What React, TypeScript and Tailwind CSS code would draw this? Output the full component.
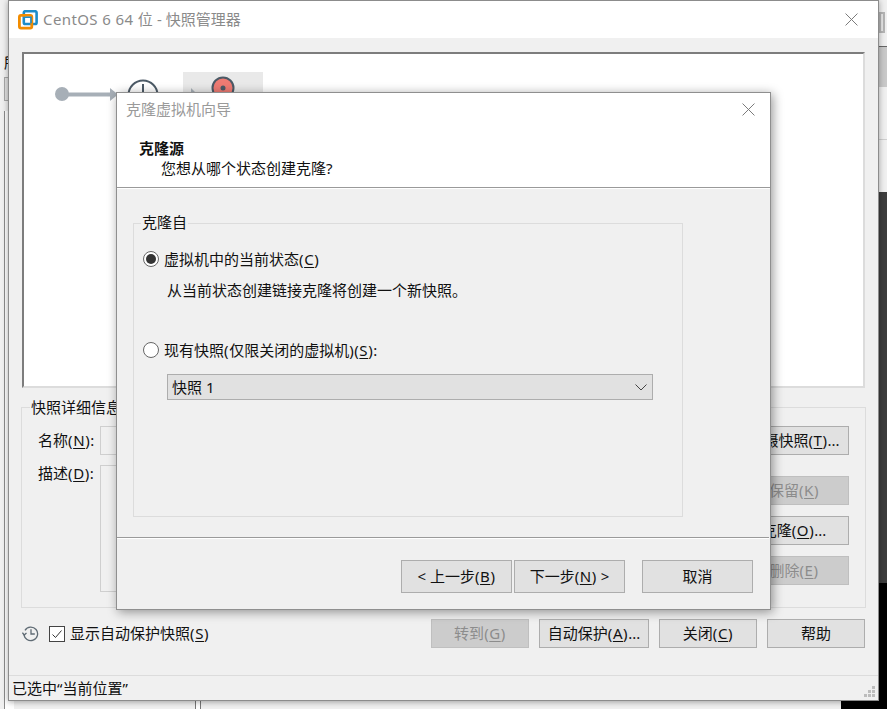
const font = { fontFamily: '"Noto Sans", "Noto Sans CJK SC", sans-serif' };

function Key({ k }: { k: string }) {
    return (
        <span className="tracking-[0.6px]">
            (<span className="underline underline-offset-2">{k}</span>)
        </span>
    );
}

function Btn({
    children,
    disabled,
    className = "",
}: {
    children: React.ReactNode;
    disabled?: boolean;
    className?: string;
}) {
    return (
        <div
            className={
                "flex items-center justify-center whitespace-pre border-[1.5px] pb-px text-[15px] " +
                (disabled
                    ? "bg-[#cccccc] border-[#bfbfbf] text-[#8c8c8c] "
                    : "bg-[#e1e1e1] border-[#adadad] text-[#111] ") +
                className
            }
        >
            <span>{children}</span>
        </div>
    );
}

function Radio({ checked }: { checked?: boolean }) {
    return (
        <span className="flex h-4 w-4 shrink-0 items-center justify-center rounded-full border border-[#666] bg-white">
            {checked && <span className="h-[10px] w-[10px] rounded-full bg-[#333]" />}
        </span>
    );
}

function CloseX({ size }: { size: number }) {
    return (
        <svg width={size} height={size} viewBox="0 0 12 12" fill="none" stroke="#777" strokeWidth="0.9">
            <path d="M0.5 0.5 11.5 11.5M11.5 0.5 0.5 11.5" />
        </svg>
    );
}

function Logo() {
    return (
        <svg width="20" height="20" viewBox="0 0 20 20" fill="none">
            <rect x="5.8" y="1.2" width="12.8" height="12.8" rx="1.6" stroke="#1c8cc9" strokeWidth="2.6" />
            <rect x="1.4" y="5.4" width="12.4" height="12.8" rx="1.6" stroke="#f28c00" strokeWidth="2.8" />
            <path d="M7 7.2h6v6" stroke="#1c8cc9" strokeWidth="1.6" />
        </svg>
    );
}

function SnapshotTree() {
    return (
        <svg width="260" height="70" viewBox="0 0 260 70" fill="none" className="block">
            <rect x="159" y="18" width="80" height="52" fill="#e9e9e9" />
            <circle cx="38" cy="40" r="7" fill="#a7afb7" />
            <path d="M40 40.5h46" stroke="#a7afb7" strokeWidth="4" />
            <path d="M86 34l8 6.500-8 6.500z" fill="#a7afb7" />
            <circle cx="119" cy="41" r="14.500" fill="#fff" stroke="#4c5a66" strokeWidth="2" />
            <path d="M119 30v12" stroke="#4c5a66" strokeWidth="2" />
            <path d="M167 34l6 6-6 6z" fill="#a7afb7" />
            <circle cx="199" cy="34" r="10.500" fill="#ee7b73" stroke="#4c5a66" strokeWidth="2" />
            <circle cx="199" cy="34" r="2.500" fill="#4c5a66" />
        </svg>
    );
}

function HistoryIcon() {
    return (
        <svg width="17" height="17" viewBox="0 0 17 17" fill="none" stroke="#5f6b74" strokeWidth="1.3">
            <path d="M3 5.300A6.800 6.800 0 1 1 2 9" />
            <path d="M0.400 7.600 2.200 10l2.300-2" />
            <path d="M9 4.300V9h3.800" />
        </svg>
    );
}

function Backdrop() {
    return (
        <>
            {/* windows behind the snapshot manager */}
            <div className="absolute left-[4px] top-[52px] text-[15px] leading-5 text-[#111]">所</div>
            <div className="absolute left-[4px] top-[77px] h-[24px] w-[10px] border border-[#a8a8a8] bg-[#e1e1e1]" />
            <div className="absolute left-[4px] top-[111px] h-[598px] w-[10px] border-l-[1.5px] border-[#8a8a8a] bg-white" />
            <div className="absolute left-[879px] top-[12px] h-[21px] w-[6px] border-2 border-[#b5b5b5] bg-[#e6e6e6]" />
            <div className="absolute left-[878px] top-[46px] h-[41px] w-[9px] border-t-[1.5px] border-[#666] bg-[#c9c9c9]" />
            <div className="absolute left-[878px] top-[139px] h-px w-[9px] bg-[#cfcfcf]" />
            <div className="absolute left-[878px] top-[192px] h-[391px] w-[9px] bg-[#3d3d3d]" />
            <div className="absolute left-[878px] top-[583px] h-[126px] w-[9px] bg-black" />
            <div className="absolute left-[841px] top-[700px] h-[9px] w-[46px] bg-black" />
            <div className="absolute left-[195px] top-[700px] h-[9px] w-[6px] border-x border-[#777] bg-white" />
        </>
    );
}

function ManagerWindow() {
    return (
        <div className="absolute left-[8px] top-0 flex h-[701px] w-[871px] flex-col border border-[#8c8c8c] bg-[#f0f0f0] shadow-[0_1px_6px_rgba(0,0,0,0.35)]">
            <div className="flex h-[37px] shrink-0 items-center bg-white pl-[9px] pr-[20px]">
                <Logo />
                <span className="ml-[5px] text-[15px] text-[#8a8a8a]">
                    <span className="tracking-[0.4px]">CentOS 6 64 位</span> - 快照管理器
                </span>
                <span className="ml-auto">
                    <CloseX size={13} />
                </span>
            </div>

            <div className="flex flex-1 flex-col px-[13px] pt-[14px]">
                <div className="h-[336px] shrink-0 border-2 border-[#dcdcdc] border-l-[#7d7d7d] border-t-[#7d7d7d] bg-white">
                    <SnapshotTree />
                </div>

                <div className="relative -mx-px mt-[19px] flex h-[201px] shrink-0 border border-[#dcdcdc] pl-[16px] pr-[16px] pt-[18px]">
                    <span className="absolute left-[8px] top-[-11px] bg-[#f0f0f0] px-px text-[15px] leading-5 text-[#111]">
                        快照详细信息
                    </span>
                    <div className="w-[62px] shrink-0 text-[15px] text-[#111]">
                        <div className="flex h-[29px] items-center">
                            名称<Key k="N" />:
                        </div>
                        <div className="mt-[9px] flex h-[19px] items-center">
                            描述<Key k="D" />:
                        </div>
                    </div>
                    <div className="w-[600px] shrink-0">
                        <div className="h-[29px] border border-[#cfcfcf]" />
                        <div className="mt-[10px] h-[127px] border border-[#cfcfcf]" />
                    </div>
                    <div className="ml-auto flex w-[110px] flex-col">
                        <Btn className="h-[29px]">
                            拍摄快照<Key k="T" />...
                        </Btn>
                        <Btn disabled className="mt-[21px] h-[29px]">
                            保留<Key k="K" />
                        </Btn>
                        <Btn className="mt-[11px] h-[29px]">
                            克隆<Key k="O" />...
                        </Btn>
                        <Btn disabled className="mt-[11px] h-[29px]">
                            删除<Key k="E" />
                        </Btn>
                    </div>
                </div>

                <div className="mt-[11px] flex h-[29px] shrink-0 items-center">
                    <HistoryIcon />
                    <span className="ml-[10px] flex h-4 w-4 items-center justify-center border border-[#444] bg-white">
                        <svg width="12" height="12" viewBox="0 0 12 12" fill="none" stroke="#333" strokeWidth="1">
                            <path d="M1.500 6.500 4.500 9.500 10.500 2.500" />
                        </svg>
                    </span>
                    <span className="ml-[5px] whitespace-nowrap text-[15px] text-[#111]">
                        显示自动保护快照<Key k="S" />
                    </span>
                    <div className="ml-auto flex gap-[10px]">
                        <Btn disabled className="h-[29px] w-[98px]">
                            转到<Key k="G" />
                        </Btn>
                        <Btn className="h-[29px] w-[110px]">
                            自动保护<Key k="A" />...
                        </Btn>
                        <Btn className="h-[29px] w-[98px]">
                            关闭<Key k="C" />
                        </Btn>
                        <Btn className="h-[29px] w-[98px]">帮助</Btn>
                    </div>
                </div>
            </div>

            <div className="relative flex h-[25px] shrink-0 items-center border-t border-[#dcdcdc] pl-[3px] text-[15px] text-[#111]">
                已选中“当前位置”
                <svg width="12" height="12" viewBox="0 0 12 12" className="absolute bottom-[2px] right-[2px]" fill="#bdbdbd">
                    <path d="M8 0h3v3H8zM4 4h3v3H4zM8 4h3v3H8zM0 8h3v3H0zM4 8h3v3H4zM8 8h3v3H8z" />
                </svg>
            </div>
        </div>
    );
}

function CloneDialog() {
    return (
        <div className="absolute left-[116px] top-[92px] flex h-[518px] w-[655px] flex-col border border-[#8f8f8f] bg-[#f0f0f0] shadow-[2px_2px_10px_rgba(0,0,0,0.4)]">
            <div className="h-[94px] shrink-0 bg-white">
                <div className="flex h-[33px] items-center pl-[9px] pr-[15px]">
                    <span className="text-[15px] text-[#9a9a9a]">克隆虚拟机向导</span>
                    <span className="ml-auto">
                        <CloseX size={13} />
                    </span>
                </div>
                <div className="pl-[22px] pt-[12px] text-[15px] font-bold leading-5 text-[#111]">克隆源</div>
                <div className="pl-[44px] text-[15px] leading-5 text-[#111]">您想从哪个状态创建克隆?</div>
            </div>
            <div className="h-[2px] shrink-0 border-t border-[#9a9a9a] bg-white" />

            <div className="flex-1 px-[16px] pt-[34px]">
                <div className="relative h-[294px] w-[550px] border border-[#dcdcdc] pl-[9px] pt-[25px] text-[15px] leading-5 text-[#111]">
                    <span className="absolute left-[7px] top-[-12px] bg-[#f0f0f0] px-px">克隆自</span>
                    <div className="flex items-center gap-[5px]">
                        <Radio checked />
                        <span>
                            虚拟机中的当前状态<Key k="C" />
                        </span>
                    </div>
                    <div className="mt-[11px] pl-[24px]">从当前状态创建链接克隆将创建一个新快照。</div>
                    <div className="mt-[40px] flex items-center gap-[5px]">
                        <Radio />
                        <span>
                            现有快照<span className="tracking-[0.6px]">(</span>仅限关闭的虚拟机<span className="tracking-[0.6px]">)</span>
                            <Key k="S" />:
                        </span>
                    </div>
                    <div className="ml-[24px] mt-[14px] flex h-[26px] w-[486px] items-center border-[1.5px] border-[#adadad] bg-[#e1e1e1] pl-[4px] pr-[5px]">
                        快照 1
                        <svg width="12" height="7" viewBox="0 0 12 7" fill="none" stroke="#444" strokeWidth="1" className="ml-auto">
                            <path d="M0.500 0.500 6 6 11.500 0.500" />
                        </svg>
                    </div>
                </div>
            </div>

            <div className="mr-px h-[2px] shrink-0 border-t border-[#9a9a9a] bg-white" />
            <div className="flex h-[70px] shrink-0 pl-[284px] pt-[21px] text-[15px]">
                <Btn className="h-[33px] w-[111px]">
                    &lt; 上一步<Key k="B" />
                </Btn>
                <Btn className="ml-[2px] h-[33px] w-[111px]">
                    下一步<Key k="N" /> &gt;
                </Btn>
                <Btn className="ml-[17px] h-[33px] w-[111px]">取消</Btn>
            </div>
        </div>
    );
}

export default function App() {
    return (
        <div className="relative h-[709px] w-[887px] overflow-hidden bg-[#f0f0f0]" style={font}>
            <Backdrop />
            <ManagerWindow />
            <CloneDialog />
        </div>
    );
}
